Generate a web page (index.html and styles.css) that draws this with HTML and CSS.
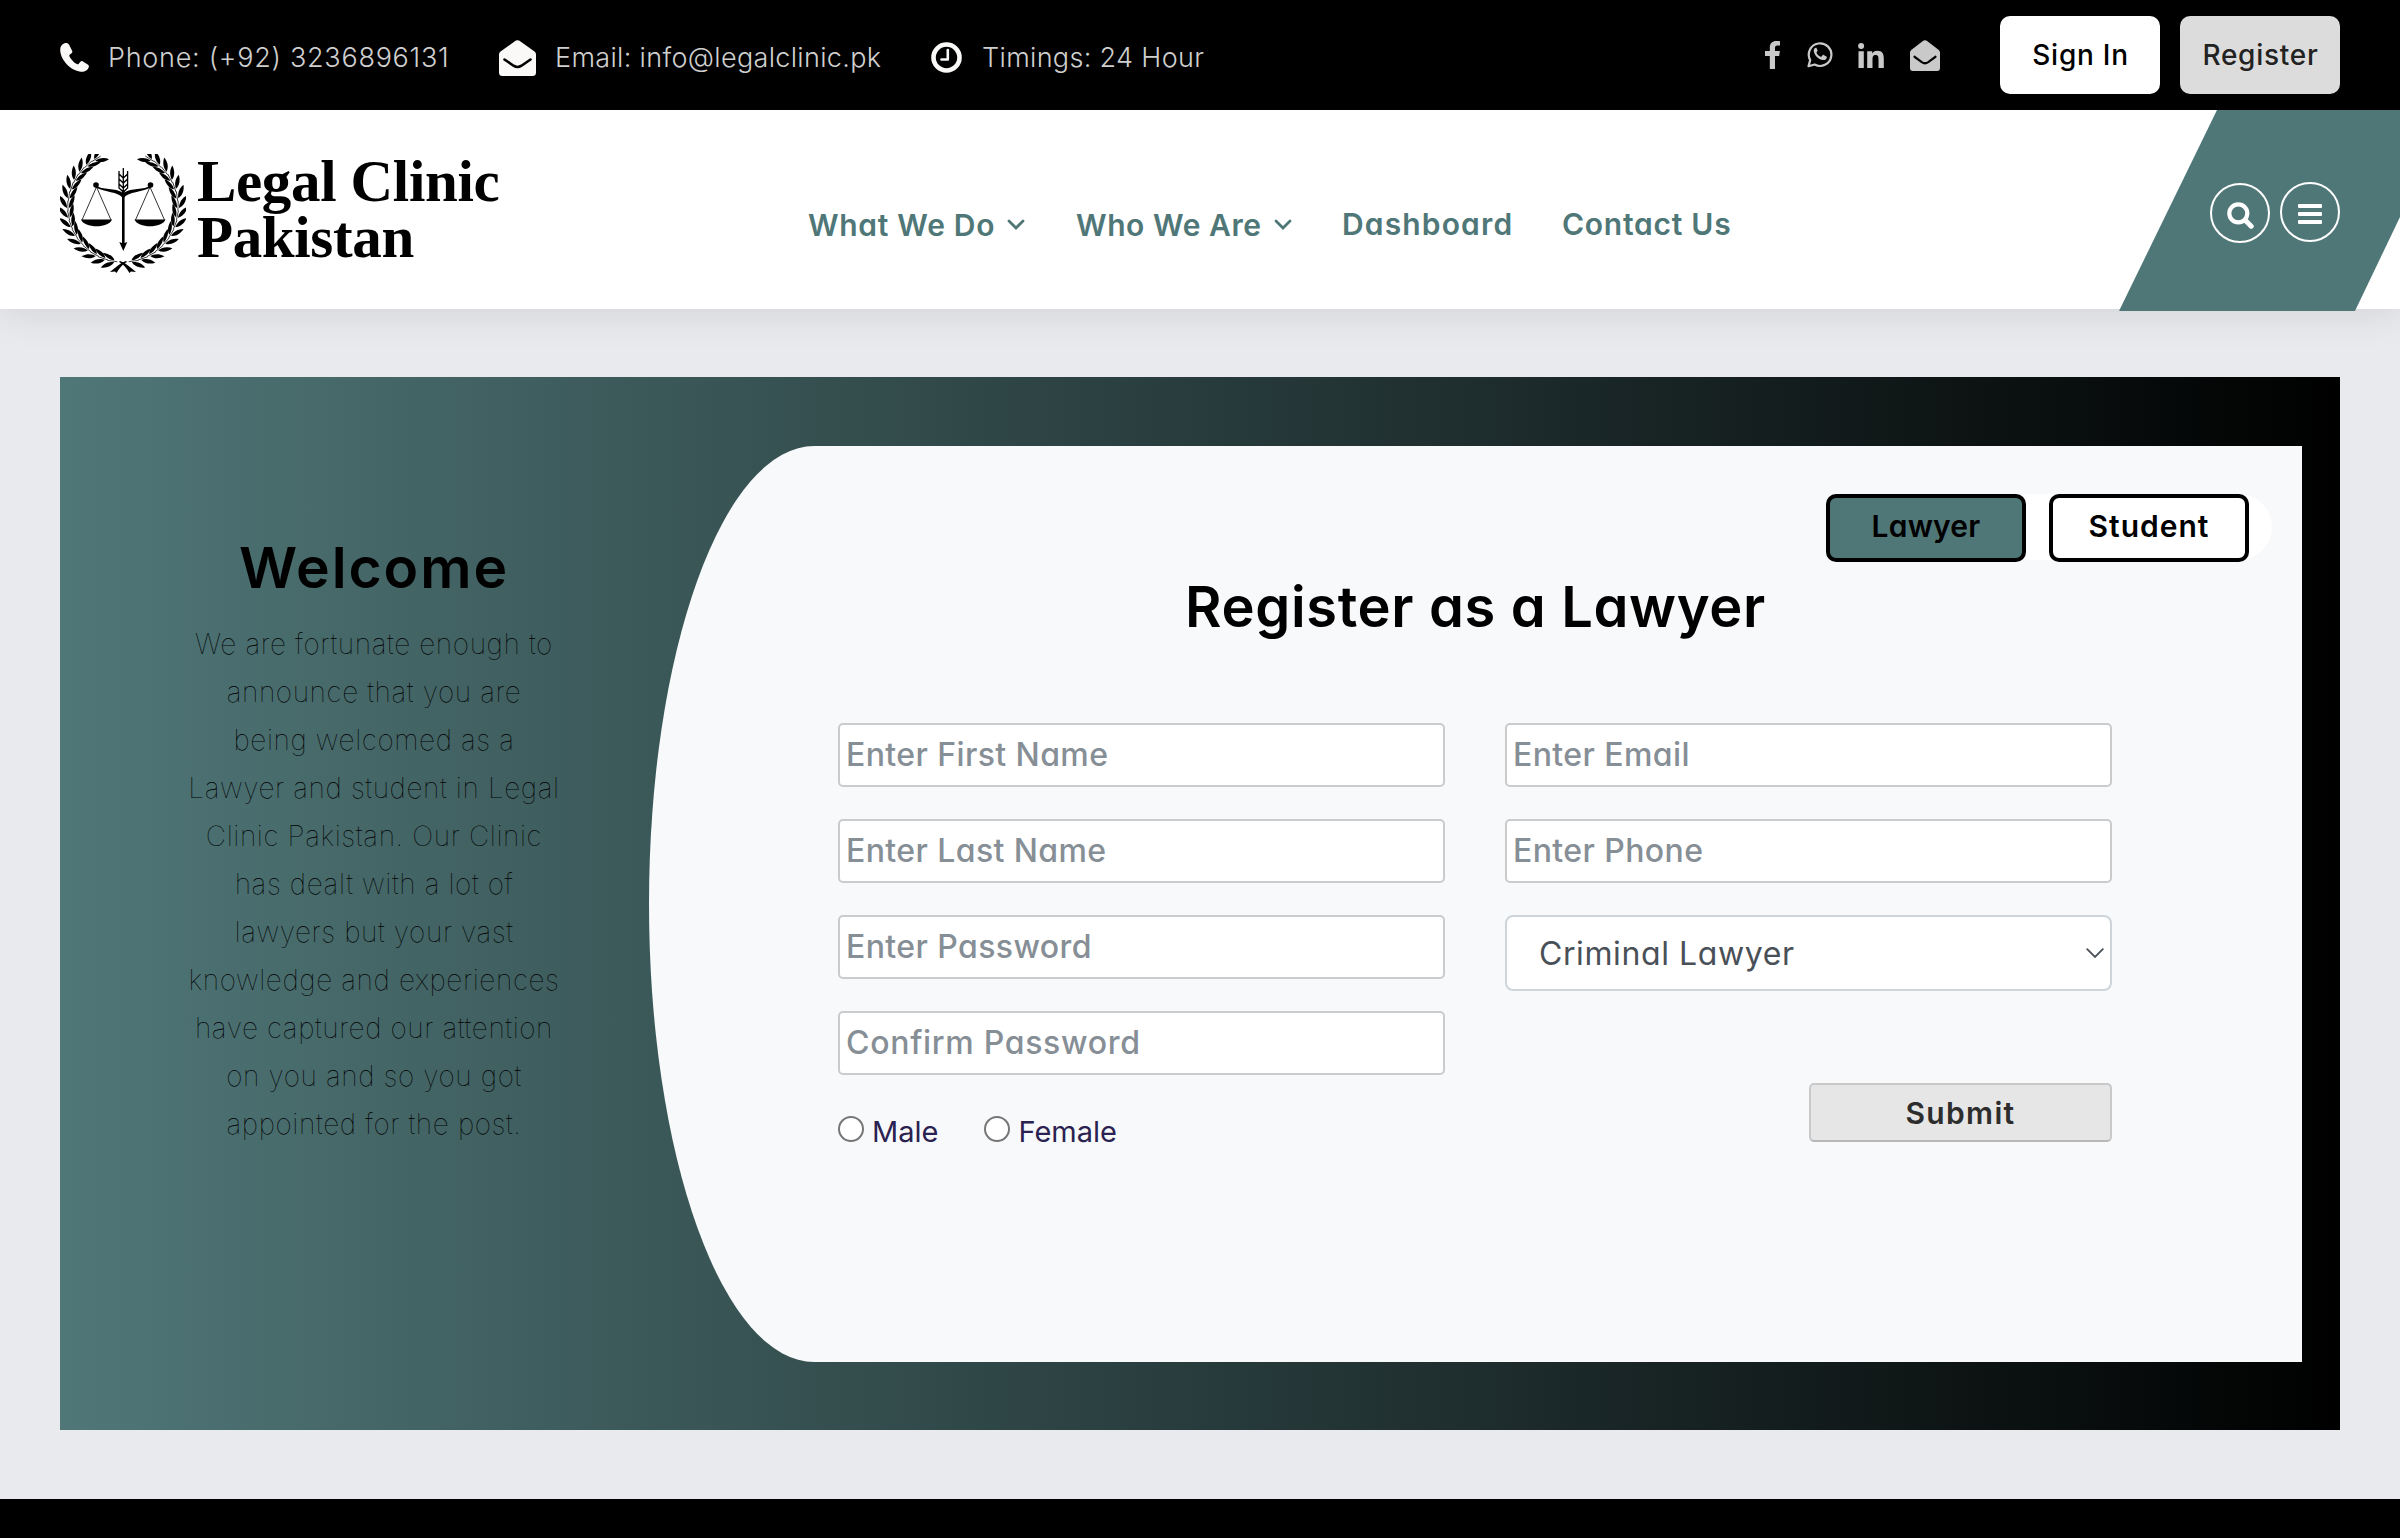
FILE: index.html
```
<!DOCTYPE html>
<html lang="en">
<head>
<meta charset="utf-8">
<title>Legal Clinic Pakistan</title>
<link rel="stylesheet" href="styles.css">
</head>
<body>
<div class="topbar">
  <ul class="contact">
    <li class="contact-item phone">
      <svg width="29" height="29" viewBox="0 0 29 29"><path fill="currentColor" d="M4.500.3C1.500 1.200 0 4 .2 7.500.8 17 10.500 27.500 20.500 28.700c4.200.4 7.500-1.500 8.300-4.700.3-1.200-.1-2-1.100-2.600l-4.800-3c-1-.6-2-.4-2.700.5l-1.500 1.900c-.5.6-1.200.7-1.900.3-3.100-1.900-5.600-4.500-7.300-7.700-.4-.7-.2-1.300.4-1.800l1.700-1.300c.8-.6 1-1.500.5-2.500L9 1.600C8.200.2 6.500-.3 4.500.3z"/></svg>
      <span class="phone-text">Phone: (+92) 3236896131</span>
    </li>
    <li class="contact-item mail">
      <svg width="37" height="36" viewBox="0 0 37 36"><path fill="currentColor" d="M15.500 1.500c2-1.800 4-1.800 6 0L35.500 11.500Q37 12.700 37 14.500V32.500Q37 36 33.500 36H3.500Q0 36 0 32.500V14.500Q0 12.700 1.500 11.500z"/><path d="M5.500 19.500l9 6.200q4 2.600 8 0l9-6.200" fill="none" stroke="#000" stroke-width="2.600" stroke-linecap="round"/></svg>
      <span class="mail-text">Email: info@legalclinic.pk</span>
    </li>
    <li class="contact-item time">
      <svg width="31" height="31" viewBox="0 0 31 31"><circle cx="15.500" cy="15.500" r="13" fill="none" stroke="currentColor" stroke-width="4.600"/><path d="M16.800 8v9.500H10.500" fill="none" stroke="currentColor" stroke-width="2.600" stroke-linecap="round" stroke-linejoin="round"/></svg>
      <span class="time-text">Timings: 24 Hour</span>
    </li>
  </ul>
  <div class="social">
    <svg class="facebook" width="15" height="28" viewBox="0 0 15 28"><path fill="currentColor" d="M15 .2V4.600h-2.600c-2 0-2.400 1-2.400 2.400v3.100h4.900l-.7 4.900H10V28H4.800V15H0v-4.900h4.800V6.400C4.800 2.300 7.400 0 11.200 0c1.800 0 3.300.1 3.800.2z"/></svg>
    <svg class="whatsapp" width="26" height="27" viewBox="0 0 26 27"><path d="M1.500 25.200l1.700-6.100A11.300 11.300 0 1 1 7.600 23.500z" fill="none" stroke="currentColor" stroke-width="2.200" stroke-linejoin="round"/><path fill="currentColor" d="M9 6.800c-1.300 0-2.600 1.600-2.200 3.700.8 4.300 5 8.200 9.300 8.600 2 .2 3.700-1.100 3.700-2.900 0-.4-.1-.6-.4-.8l-2.700-1.400c-.5-.3-.8-.2-1.100.2l-1 1.300c-.3.4-.7.400-1.100.2-1.700-.8-3-2-3.900-3.700-.2-.4-.1-.7.200-1 .9-1 .9-1.100.7-1.700L9.600 7.200c-.1-.3-.3-.4-.6-.4z"/></svg>
    <svg class="linkedin" width="26" height="25" viewBox="0 0 26 25"><circle cx="3.100" cy="3" r="3" fill="currentColor"/><path fill="currentColor" d="M.5 8.200h5.300V25H.5zM9.200 8.200h5v2.300c.8-1.500 2.500-2.800 5.100-2.800 5.200 0 6.500 3.200 6.500 7.800V25h-5.300v-8.600c0-2.100-.1-4.300-2.800-4.300s-3.200 2-3.200 4.200V25H9.200z"/></svg>
    <svg class="envelope" width="30" height="31" viewBox="0 0 37 36" preserveAspectRatio="none"><path fill="currentColor" d="M15.500 1.500c2-1.800 4-1.800 6 0L35.500 11.500Q37 12.700 37 14.500V32.500Q37 36 33.500 36H3.500Q0 36 0 32.500V14.500Q0 12.700 1.500 11.500z"/><path d="M5.500 19.500l9 6.200q4 2.600 8 0l9-6.200" fill="none" stroke="#000" stroke-width="2.600" stroke-linecap="round"/></svg>
  </div>
  <div class="account">
    <a class="account-btn sign-in">Sign In</a>
    <a class="account-btn sign-up">Register</a>
  </div>
</div>

<header class="header">
  <a class="brand">
    <svg class="emblem" width="126" height="119" viewBox="0 0 126 119">
      <defs>
        <g id="sprig">
          <path d="M-1 1C-4 .8-10 2-13.500 8-8 8-3 5.500-1 1z"/>
          <path d="M-1-1C-4-.8-10-2-13.500-7-8-7-3-5.200-1-1z"/>
          <path d="M2 0h-10" stroke="#000" stroke-width=".7"/>
        </g>
        <g id="branch">
          <use href="#sprig" transform="rotate(8 63 53) translate(63 108)"/>
          <use href="#sprig" transform="rotate(18 63 53) translate(63 108)"/>
          <use href="#sprig" transform="rotate(28 63 53) translate(63 108)"/>
          <use href="#sprig" transform="rotate(38 63 53) translate(63 108)"/>
          <use href="#sprig" transform="rotate(48 63 53) translate(63 108)"/>
          <use href="#sprig" transform="rotate(58 63 53) translate(63 108)"/>
          <use href="#sprig" transform="rotate(68 63 53) translate(63 108)"/>
          <use href="#sprig" transform="rotate(78 63 53) translate(63 108)"/>
          <use href="#sprig" transform="rotate(88 63 53) translate(63 108)"/>
          <use href="#sprig" transform="rotate(98 63 53) translate(63 108)"/>
          <use href="#sprig" transform="rotate(108 63 53) translate(63 108)"/>
          <use href="#sprig" transform="rotate(118 63 53) translate(63 108)"/>
          <use href="#sprig" transform="rotate(128 63 53) translate(63 108)"/>
          <use href="#sprig" transform="rotate(138 63 53) translate(63 108)"/>
          <use href="#sprig" transform="rotate(148 63 53) translate(63 108)"/>
          <path d="M66 107c-6 2-10 6-16 11l5-.5 1.500 1.500c3-5 6-9 10.500-11z"/>
        </g>
        <g id="pan">
          <path d="M36.500 33L22 66M36.500 33L51 66" fill="none" stroke="#000" stroke-width=".8"/>
          <path d="M21 65.500h31c-3 9-28 9-31 0z"/>
          <circle cx="36" cy="31" r="2.800"/>
          <path d="M35 31c8 6 20 2 28 8v5c-6-7-17-5-28-11z"/>
        </g>
      </defs>
      <use href="#branch"/>
      <use href="#branch" transform="translate(126 0) scale(-1 1)"/>
      <use href="#pan"/>
      <use href="#pan" transform="translate(126.500 0) scale(-1 1)"/>
      <path d="M62 36h2.600v53l2.700-1L63.300 97 59.300 88l2.700 1z"/>
      <path d="M63.300 14v24M59 17v17l4.300 4 4.300-4V17M59 20l4.300 4 4.300-4M59 25l4.300 4 4.300-4M59 30l4.300 4 4.300-4" fill="none" stroke="#000" stroke-width="1.300"/>
    </svg>
    <span class="brand-name">Legal Clinic<br>Pakistan</span>
  </a>
  <nav class="nav">
    <a class="nav-link has-menu what">What We Do<svg width="18" height="12" viewBox="0 0 18 12"><path d="M2 2l7 7 7-7" fill="none" stroke="currentColor" stroke-width="2.800" stroke-linecap="round"/></svg></a>
    <a class="nav-link has-menu who">Who We Are<svg width="18" height="12" viewBox="0 0 18 12"><path d="M2 2l7 7 7-7" fill="none" stroke="currentColor" stroke-width="2.800" stroke-linecap="round"/></svg></a>
    <a class="nav-link dashboard">Dashboard</a>
    <a class="nav-link contact-us">Contact Us</a>
  </nav>
  <div class="tools">
    <a class="tool search"><svg width="27" height="27" viewBox="0 0 27 27" fill="none" stroke="currentColor"><circle cx="11.300" cy="11.300" r="9" stroke-width="4.200"/><path d="M18.500 18.500l5.700 5.700" stroke-width="5" stroke-linecap="round"/></svg></a>
    <a class="tool menu"><svg width="24" height="20" viewBox="0 0 24 20" fill="currentColor"><rect width="24" height="4" rx="1"/><rect y="8" width="24" height="4" rx="1"/><rect y="16" width="24" height="4" rx="1"/></svg></a>
  </div>
</header>

<main class="register">
  <section class="welcome">
    <h2 class="welcome-title">Welcome</h2>
    <p class="welcome-text">We are fortunate enough to<br>announce that you are<br>being welcomed as a<br>Lawyer and student in Legal<br>Clinic Pakistan. Our Clinic<br>has dealt with a lot of<br>lawyers but your vast<br>knowledge and experiences<br>have captured our attention<br>on you and so you got<br>appointed for the post.</p>
  </section>
  <section class="card">
    <div class="tabs">
      <a class="tab active">Lawyer</a>
      <a class="tab student">Student</a>
    </div>
    <h1 class="card-title">Register as a Lawyer</h1>
    <form class="form">
      <div class="column">
        <input class="field" type="text" placeholder="Enter First Name">
        <input class="field" type="text" placeholder="Enter Last Name">
        <input class="field" type="password" placeholder="Enter Password">
        <input class="field confirm" type="password" placeholder="Confirm Password">
        <div class="gender">
          <label class="choice"><input class="radio" type="radio" name="gender"><span>Male</span></label>
          <label class="choice"><input class="radio" type="radio" name="gender"><span>Female</span></label>
        </div>
      </div>
      <div class="column">
        <input class="field" type="email" placeholder="Enter Email">
        <input class="field" type="text" placeholder="Enter Phone">
        <div class="select">
          <span>Criminal Lawyer</span>
          <svg width="18" height="11" viewBox="0 0 18 11"><path d="M1.200 1.200L9 9l7.800-7.800" fill="none" stroke="currentColor" stroke-width="1.800" stroke-linecap="round"/></svg>
        </div>
        <button class="submit" type="button">Submit</button>
      </div>
    </form>
  </section>
</main>
<footer class="footer"></footer>
</body>
</html>
```
FILE: styles.css
```
* { box-sizing: border-box; }

body {
  margin: 0;
  height: 1538px;
  overflow: hidden;
  display: flex;
  flex-direction: column;
  background: #e9eaee;
  font-family: Inter, "Liberation Sans", sans-serif;
  font-feature-settings: "cv11";
}

svg { display: block; flex: none; }

/* Top bar */
.topbar {
  height: 110px;
  flex: none;
  display: flex;
  align-items: center;
  padding: 0 60px;
  background: #000;
}
.contact {
  display: flex;
  flex: 1;
  margin: 0;
  padding: 5px 0 0;
  list-style: none;
  color: #cfcfcf;
  font-size: 27px;
  font-weight: 300;
  line-height: 36px;
  font-feature-settings: normal;
}
.contact-item { display: flex; align-items: center; }
.contact-item svg { color: #fbf9f7; }
.phone { width: 439px; gap: 19px; }
.mail { width: 432px; gap: 19px; }
.time { gap: 20px; }
.phone-text { letter-spacing: .73px; }
.mail-text { letter-spacing: .33px; }
.time-text { letter-spacing: .33px; }

.social {
  display: flex;
  align-items: center;
  color: #c9c9c9;
  margin-right: 60px;
}
.facebook,
.whatsapp { margin-bottom: 1px; }
.whatsapp { margin-left: 27px; }
.linkedin { margin-left: 25px; }
.envelope { margin-left: 26px; }

.account { display: flex; gap: 20px; }
.account-btn {
  width: 160px;
  height: 78px;
  padding: 0 0 1px 1px;
  display: flex;
  align-items: center;
  justify-content: center;
  border-radius: 10px;
  font-size: 28px;
  font-weight: 500;
  letter-spacing: .75px;
}
.sign-in { background: #fff; color: #000; }
.sign-up { background: #dcdcdc; color: #222; }

/* Header */
.header {
  position: relative;
  z-index: 1;
  height: 199px;
  flex: none;
  display: flex;
  align-items: flex-start;
  padding: 0 60px;
  background: #fff;
  box-shadow: 0 0 40px rgba(0, 0, 0, .12);
  clip-path: inset(0 0 -80px 0);
}
.header::before {
  content: "";
  position: absolute;
  top: 0;
  right: 0;
  width: 281px;
  height: 201px;
  background: #507778;
  clip-path: polygon(98px 0, 281px 0, 281px 107px, 236px 100%, 0 100%);
}
.brand { display: flex; width: 748px; gap: 11px; padding-top: 44px; }
.brand-name {
  margin-top: -1px;
  font: 700 59px/56px "Liberation Serif", serif;
  letter-spacing: -.35px;
  white-space: nowrap;
}
.nav {
  display: grid;
  grid-template-columns: 268px 266px 220px 220px;
  padding-top: 95px;
  color: #507778;
  font-size: 30px;
  font-weight: 600;
  line-height: 40px;
  white-space: nowrap;
}
.nav-link { display: flex; align-items: center; }
.has-menu { gap: 12px; }
.what { letter-spacing: .7px; }
.who { letter-spacing: .55px; }
.dashboard { letter-spacing: 1.15px; margin-top: -2px; }
.contact-us { letter-spacing: .75px; margin-top: -2px; }
.tools {
  position: relative;
  display: flex;
  gap: 10px;
  margin-left: auto;
  padding-top: 72px;
  color: #fff;
}
.tool {
  width: 60px;
  height: 60px;
  display: flex;
  align-items: center;
  justify-content: center;
  border: 2px solid #fff;
  border-radius: 50%;
}
.search { margin-top: 1px; padding-top: 4px; }
.menu { padding-top: 4px; }

/* Registration panel */
.register {
  flex: none;
  height: 1053px;
  margin: 68px 60px 69px;
  padding: 69px 38px 68px 0;
  display: flex;
  background: linear-gradient(to right, #507778, #000);
}
.welcome {
  width: 589px;
  flex: none;
  padding: 89px 0 0 39px;
  text-align: center;
  color: #000;
}
.welcome-title,
.welcome-text { width: 550px; }
.welcome-title {
  margin: 0 0 19px;
  font-size: 57px;
  font-weight: 600;
  line-height: 66px;
  letter-spacing: 1.9px;
}
.welcome-text {
  margin: 0;
  font-size: 28px;
  font-weight: 100;
  line-height: 48px;
  letter-spacing: .6px;
  font-feature-settings: normal;
}
.card {
  flex: 1;
  padding-top: 48px;
  background: #f8f9fb;
  border-radius: 10% 0 0 10% / 50% 0 0 50%;
}
.tabs {
  display: flex;
  width: 446px;
  height: 66px;
  margin: 0 30px 0 auto;
  gap: 23px;
  background: #fff;
  border-radius: 33px;
}
.tab {
  width: 200px;
  height: 68px;
  flex: none;
  padding-bottom: 5px;
  display: flex;
  align-items: center;
  justify-content: center;
  border: 4px solid #000;
  border-radius: 10px;
  background: #fff;
  color: #000;
  font-size: 30px;
  font-weight: 600;
  letter-spacing: .2px;
}
.tab.active { background: #507778; }
.student { letter-spacing: 1px; }
.card-title {
  margin: 14px 0 83px;
  text-align: center;
  font-size: 56px;
  font-weight: 600;
  line-height: 66px;
  letter-spacing: .66px;
  color: #000;
}
.form { display: flex; gap: 60px; padding-left: 189px; }
.column { width: 607px; display: flex; flex-direction: column; gap: 32px; }
.field {
  width: 100%;
  height: 64px;
  padding: 0 6px 2px;
  border: 2px solid #c9cbcc;
  border-radius: 5px;
  background: #fff;
  font: 500 32px Inter, sans-serif;
  font-feature-settings: "cv11";
  letter-spacing: .4px;
}
.field::placeholder { color: #868e96; opacity: 1; }
.confirm { letter-spacing: .7px; }
.select {
  height: 76px;
  display: flex;
  align-items: center;
  justify-content: space-between;
  padding: 0 6px 0 32px;
  border: 2px solid #ced4da;
  border-radius: 8px;
  background: #fff;
  color: #495057;
  font-size: 32px;
  letter-spacing: .6px;
}
.submit {
  width: 303px;
  height: 59px;
  margin: 60px 0 0 auto;
  border: 2px solid #c9c9c9;
  border-bottom-color: #b8b8b8;
  border-radius: 5px;
  background: #e6e6e6;
  color: #2d2d2d;
  font: 600 30px Inter, sans-serif;
  letter-spacing: 1.3px;
}
.gender {
  display: flex;
  gap: 46px;
  padding-top: 7px;
  color: #2a2250;
  font-size: 29px;
  line-height: 36px;
  font-feature-settings: normal;
}
.choice { display: flex; align-items: flex-start; gap: 8px; }
.radio {
  appearance: none;
  width: 26px;
  height: 26px;
  margin: 2px 0 0;
  border: 2px solid #767676;
  border-radius: 50%;
  background: #fff;
}

.footer { height: 39px; flex: none; background: #000; }
```
